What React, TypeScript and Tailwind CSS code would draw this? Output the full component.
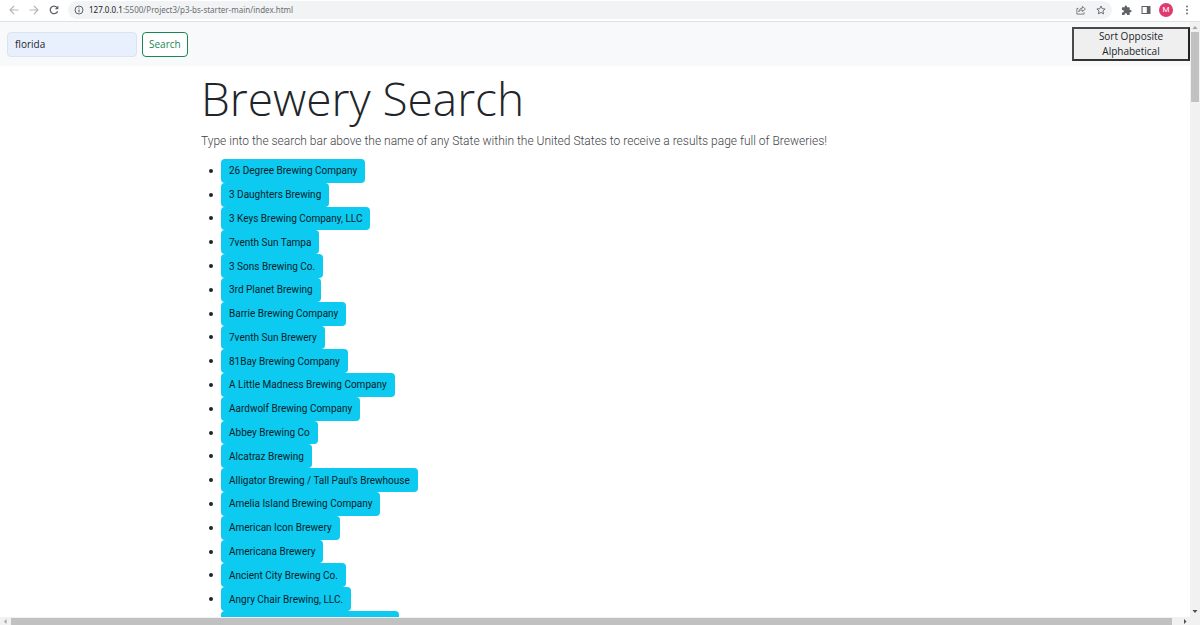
import React from "react";

const breweries: string[] = [
  "26 Degree Brewing Company",
  "3 Daughters Brewing",
  "3 Keys Brewing Company, LLC",
  "7venth Sun Tampa",
  "3 Sons Brewing Co.",
  "3rd Planet Brewing",
  "Barrie Brewing Company",
  "7venth Sun Brewery",
  "81Bay Brewing Company",
  "A Little Madness Brewing Company",
  "Aardwolf Brewing Company",
  "Abbey Brewing Co",
  "Alcatraz Brewing",
  "Alligator Brewing / Tall Paul's Brewhouse",
  "Amelia Island Brewing Company",
  "American Icon Brewery",
  "Americana Brewery",
  "Ancient City Brewing Co.",
  "Angry Chair Brewing, LLC.",
];

function BrowserBar() {
  return (
    <header className="flex h-[22px] shrink-0 items-center border-b border-[#dfe1e4] bg-white px-2 pb-px text-[#5f6368]">
      <button type="button" aria-label="Back" className="flex w-3 justify-center text-[#b4b6b9]">
        <svg width="10" height="10" viewBox="0 0 10 10" fill="none" stroke="currentColor" strokeWidth="1.1">
          <path d="M9.5 5H1M5 1 1 5l4 4" />
        </svg>
      </button>
      <button type="button" aria-label="Forward" className="ml-2 flex w-3 justify-center text-[#b4b6b9]">
        <svg width="10" height="10" viewBox="0 0 10 10" fill="none" stroke="currentColor" strokeWidth="1.1">
          <path d="M.5 5H9M5 1l4 4-4 4" />
        </svg>
      </button>
      <button type="button" aria-label="Reload" className="ml-2 flex w-3 justify-center">
        <svg width="10" height="10" viewBox="0 0 10 10" fill="none" stroke="currentColor" strokeWidth="1.3">
          <path d="M8.6 6.2A3.8 3.8 0 1 1 7.9 2.4L8.6 3.2" />
          <path d="M9.4.6v3.6H5.8z" fill="currentColor" stroke="none" />
        </svg>
      </button>
      <div className="ml-2 flex h-[18px] min-w-0 flex-1 items-center rounded-full bg-[#f1f3f4] px-[6px]">
        <svg width="10" height="10" viewBox="0 0 10 10" fill="none" stroke="currentColor" strokeWidth="1">
          <circle cx="5" cy="5" r="4" />
          <path d="M5 4.4v2.8M5 2.6v1" strokeWidth="1.1" />
        </svg>
        <p className="ml-[5px] flex-1 font-['Noto_Sans','Open_Sans',sans-serif] text-[8px] leading-[12px] text-[#6b6f73]">
          <span className="text-[#202124]">127.0.0.1</span>:5500/Project3/p3-bs-starter-main/index.html
        </p>
        <button type="button" aria-label="Share">
          <svg width="10" height="10" viewBox="0 0 10 10" fill="none" stroke="currentColor" strokeWidth="0.8">
            <path d="M2.4 3.4H.9v5.7h7.2V7.3" />
            <path d="M2.8 6.8C3 4.5 4.4 3.3 6.3 3.2V1.4L9.4 4 6.3 6.6V4.9C4.8 4.9 3.6 5.4 2.8 6.8z" />
          </svg>
        </button>
        <button type="button" aria-label="Bookmark" className="ml-[10px]">
          <svg width="10" height="10" viewBox="0 0 10 10" fill="none" stroke="currentColor" strokeWidth="0.9">
            <path d="m5 1 1.2 2.7 2.9.3-2.2 2 .7 2.9L5 7.4 2.4 8.9l.7-2.9L.9 4l2.9-.3z" />
          </svg>
        </button>
      </div>
      <button type="button" aria-label="Extensions" className="ml-[9px]">
        <svg width="11" height="11" viewBox="0 0 24 24" fill="currentColor">
          <path d="M20.5 11H19V7c0-1.100-.9-2-2-2h-4V3.500a2.500 2.500 0 0 0-5 0V5H4c-1.100 0-2 .9-2 2v3.800h1.500a2.700 2.700 0 0 1 0 5.400H2V20c0 1.100.9 2 2 2h3.800v-1.500a2.700 2.700 0 0 1 5.400 0V22H17c1.100 0 2-.9 2-2v-4h1.500a2.500 2.500 0 0 0 0-5z" />
        </svg>
      </button>
      <button type="button" aria-label="Side panel" className="ml-[9px]">
        <svg width="10" height="10" viewBox="0 0 10 10" fill="currentColor">
          <path d="M.5 1h9v8h-9zM1.600 2.100v5.800h4.200V2.100z" fillRule="evenodd" />
        </svg>
      </button>
      <button
        type="button"
        aria-label="Profile"
        className="ml-2 flex size-[14px] items-center justify-center rounded-full bg-[#e0396f] font-['Roboto',sans-serif] text-[8px] leading-none text-white"
      >
        M
      </button>
      <button type="button" aria-label="Menu" className="ml-[9px]">
        <svg width="10" height="10" viewBox="0 0 10 10" fill="currentColor">
          <circle cx="5" cy="1.500" r="0.900" />
          <circle cx="5" cy="5" r="0.900" />
          <circle cx="5" cy="8.500" r="0.900" />
        </svg>
      </button>
    </header>
  );
}

function VerticalScrollbar() {
  return (
    <div className="flex w-[10px] shrink-0 flex-col items-center bg-[#f1f1f1]">
      <svg width="10" height="10" viewBox="0 0 10 10" fill="#a3a3a3">
        <path d="M2.500 7h5L5 4z" />
      </svg>
      <div className="h-[70px] w-2 bg-[#c1c1c1]" />
      <svg className="mt-auto" width="10" height="10" viewBox="0 0 10 10" fill="#505050">
        <path d="M2.500 3h5L5 6z" />
      </svg>
    </div>
  );
}

function HorizontalScrollbar() {
  return (
    <div className="flex h-2 shrink-0 items-center bg-[#f1f1f1] pr-[10px]">
      <svg width="11" height="8" viewBox="0 0 11 8" fill="#a3a3a3">
        <path d="M6.500 2v5L4 4.500z" />
      </svg>
      <div className="mr-[7px] h-[7px] flex-1 bg-[#c1c1c1]" />
      <svg width="11" height="8" viewBox="0 0 11 8" fill="#505050">
        <path d="M5 2v5l2.500-2.500z" />
      </svg>
    </div>
  );
}

export default function App() {
  return (
    <div className="flex h-screen flex-col overflow-hidden bg-white font-['Roboto','Open_Sans',sans-serif] text-[10px] text-[#212529]">
      <BrowserBar />
      <div className="flex min-h-0 flex-1">
        <div className="min-w-0 flex-1 overflow-hidden">
          <nav className="flex h-[44px] items-center justify-between bg-[#f8f9fa] pl-[7px] font-['Open_Sans','Noto_Sans',sans-serif]">
            <form className="flex gap-[5px]" onSubmit={(e) => e.preventDefault()}>
              <input
                type="search"
                aria-label="Search"
                defaultValue="florida"
                className="h-[25px] w-[130px] rounded-[4px] border border-[#dde3ee] bg-[#e8f0fe] px-[7px] outline-none"
              />
              <button
                type="submit"
                className="h-[25px] rounded-[4px] border border-[#198754] bg-white px-[6px] text-[#198754]"
              >
                Search
              </button>
            </form>
            <button
              type="button"
              className="w-[118px] border-2 border-[#4a4a4c] border-r-[#222] border-b-[#333] bg-[#efefef] px-4 leading-[15px] text-[#212529]"
            >
              Sort Opposite Alphabetical
            </button>
          </nav>
          <main className="mx-auto max-w-[804px] px-2 pt-[2px]">
            <h1 className="font-['Open_Sans','Noto_Sans',sans-serif] text-[46px] leading-[60px] font-light whitespace-nowrap">
              Brewery Search
            </h1>
            <p className="mt-[3px] text-[12px] leading-[20px] font-light whitespace-nowrap text-[#3f4347]">
              Type into the search bar above the name of any State within the United States to receive a results page full of Breweries!
            </p>
            <ul className="mt-2 grid h-[452px] auto-rows-fr pl-2">
              {breweries.map((name) => (
                <li key={name} className="flex items-center gap-2">
                  <span className="size-1 rounded-full bg-[#212529]" />
                  <button type="button" className="h-full rounded-[4px] bg-[#0dcaf0] px-2 whitespace-nowrap text-[#06222a]">
                    {name}
                  </button>
                </li>
              ))}
            </ul>
            <div className="ml-5 h-6 w-[178px] rounded-[4px] bg-[#0dcaf0]" />
          </main>
        </div>
        <VerticalScrollbar />
      </div>
      <HorizontalScrollbar />
    </div>
  );
}
